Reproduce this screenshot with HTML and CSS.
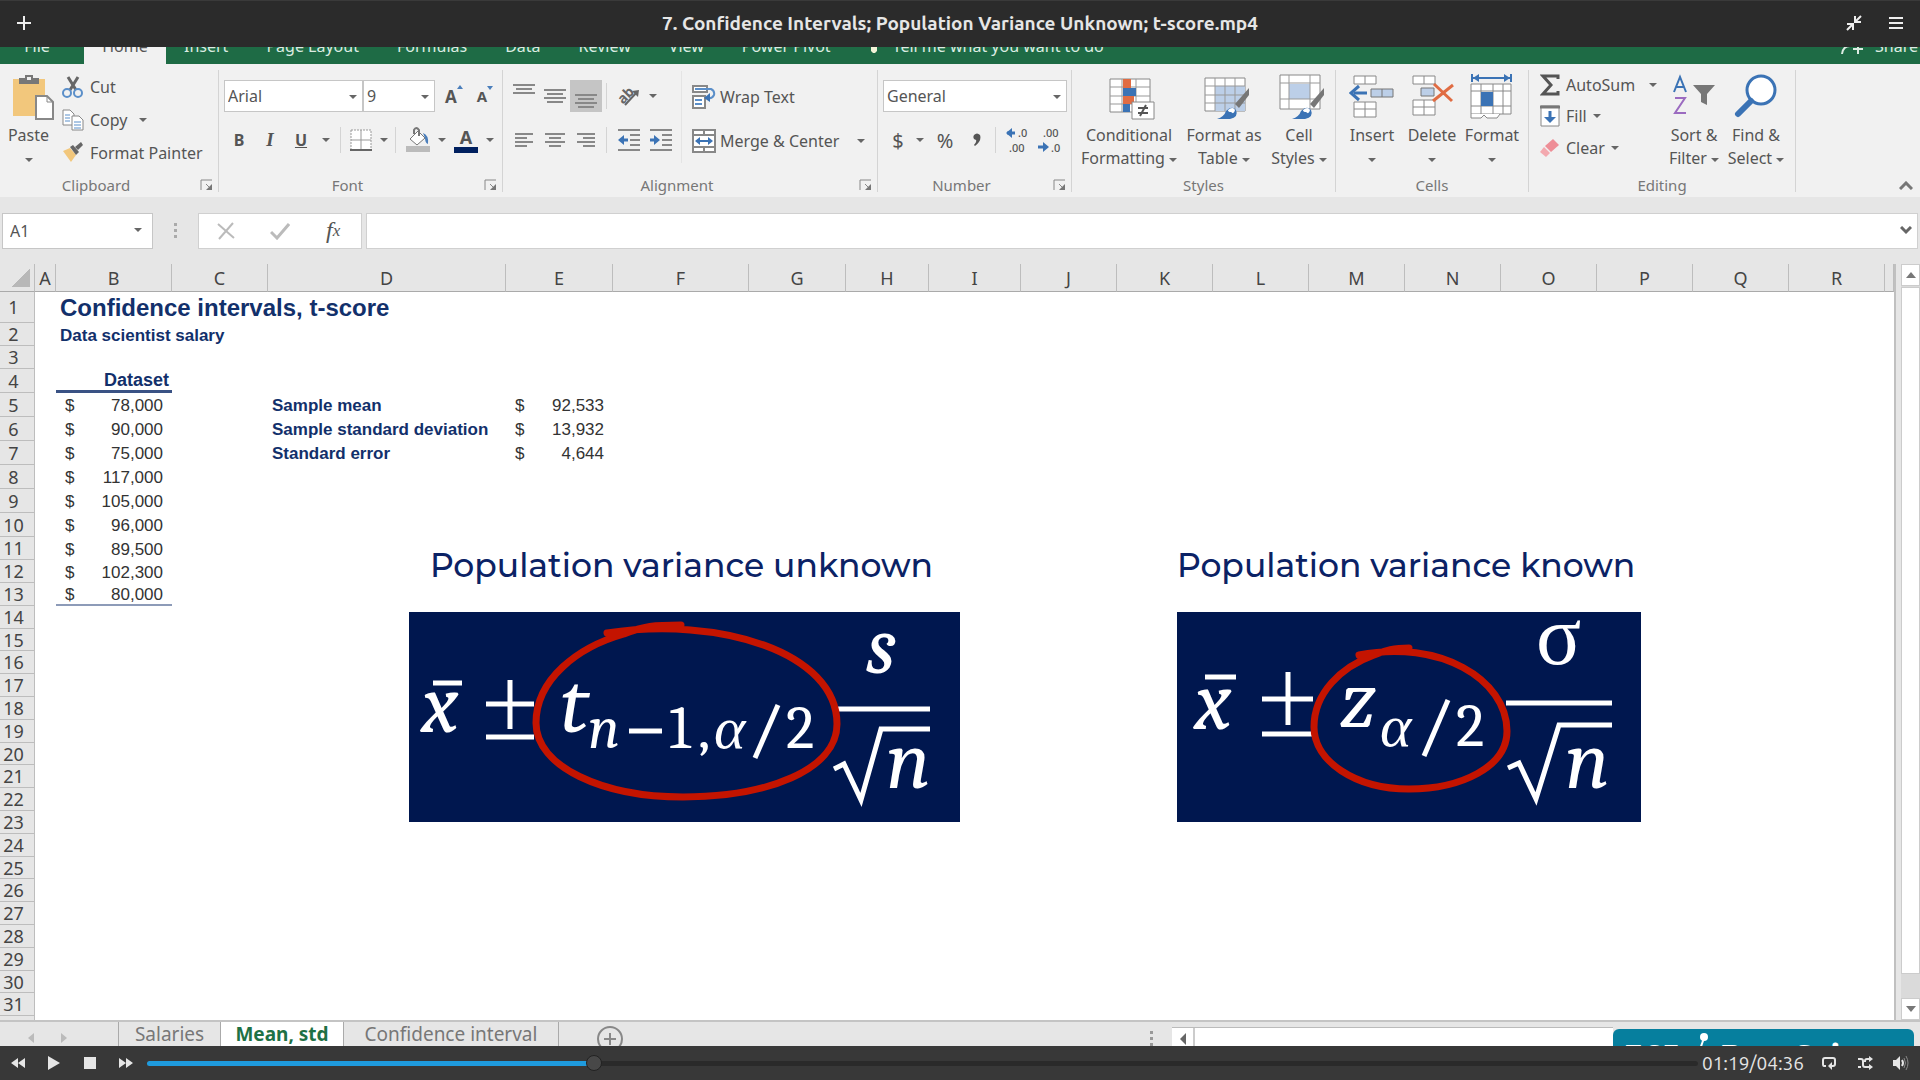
FILE: index.html
```html
<!DOCTYPE html>
<html lang="en">
  <head>
    <meta charset="UTF-8" />
    <title>7. Confidence Intervals; Population Variance Unknown; t-score.mp4</title>
    <link rel="stylesheet" href="styles.css" />
  </head>
  <body>
    <header class="titlebar">
      <button type="button" aria-label="Add">
        <svg width="14" height="14"><path d="M7 0v14M0 7h14" stroke="#eee" stroke-width="2" /></svg>
      </button>
      <h1>7. Confidence Intervals; Population Variance Unknown; t-score.mp4</h1>
      <div class="window-buttons">
        <button type="button" aria-label="Leave fullscreen">
          <svg width="16" height="16" fill="none" stroke="#eee" stroke-width="2">
            <path d="M15 1L10 6M9 1v6h6M1 15l5-5M1 9h6v6" />
          </svg>
        </button>
        <button type="button" aria-label="Menu">
          <svg width="14" height="12"><path d="M0 1h14M0 6h14M0 11h14" stroke="#eee" stroke-width="2" /></svg>
        </button>
      </div>
    </header>

    <main class="video">
      <nav class="tabs">
        <a href="#" class="tab-file">File</a>
        <a href="#" class="tab-home">Home</a>
        <a href="#">Insert</a>
        <a href="#">Page Layout</a>
        <a href="#">Formulas</a>
        <a href="#">Data</a>
        <a href="#">Review</a>
        <a href="#">View</a>
        <a href="#">Power Pivot</a>
        <a href="#" class="tell-me">
          <svg width="10" height="18"><circle cx="5" cy="6" r="4" fill="none" stroke="#dcebe2" stroke-width="2" /><path d="M2 9h6v5l-2 2H4l-2-2z" fill="#f3f3d8" /></svg>
          Tell me what you want to do
        </a>
        <a href="#" class="share">
          <svg width="24" height="20" fill="none" stroke="#dcebe2" stroke-width="2"><circle cx="9" cy="5" r="4" /><path d="M1 18q1-8 8-8M17 8v10M12 13h10" /></svg>
          Share
        </a>
      </nav>

      <!-- ribbon -->
      <section class="ribbon">
        <div class="group clipboard">
          <div class="body">
            <button type="button" class="big">
              <svg width="44" height="46">
                <path d="M2 5h32v37H2z" fill="#f2c77c" />
                <path d="M8 4h6V1h8v3h6v6H8z" fill="#777" /><path d="M16 3h4v3h-4z" fill="#eee" />
                <path d="M25 22h11l6 6v17H25z" fill="#fff" stroke="#888" stroke-width="2" />
                <path d="M36 22v6h6" fill="none" stroke="#888" />
              </svg>
              <span>Paste<br /><i class="caret"></i></span>
            </button>
            <div class="stack">
              <button type="button">
                <svg width="22" height="22" fill="none">
                  <path d="M6 1l8 13M16 1L8 14" stroke="#666" stroke-width="3" />
                  <circle cx="5" cy="17" r="4" stroke="#5b8fc9" stroke-width="2" /><circle cx="16" cy="17" r="4" stroke="#5b8fc9" stroke-width="2" />
                </svg>
                Cut
              </button>
              <button type="button">
                <svg width="22" height="22" fill="#fff" stroke="#888">
                  <path d="M1 1h7l4 4v11H1z" /><path d="M10 7h7l4 4v10H10z" />
                  <path d="M3 6h5M3 9h5M3 12h5M12 13h7M12 16h7M12 19h7" stroke="#5b8fc9" />
                </svg>
                Copy <i class="caret"></i>
              </button>
              <button type="button">
                <svg width="22" height="22">
                  <path d="M1 9l7-3 6 7-5 7z" fill="#f2c77c" /><path d="M8 5l3-2 6 7-3 3z" fill="#666" /><path d="M13 5l6-5 2 3-5 5z" fill="#666" />
                </svg>
                Format Painter
              </button>
            </div>
          </div>
          <footer><span>Clipboard</span><button type="button" class="launch" aria-label="Clipboard options"><svg width="14" height="12"><path d="M1 11V1h11M6 5l4 4" fill="none" stroke="#888" /><path d="M12 5v6H6z" fill="#777" /></svg></button></footer>
        </div>

        <div class="group font">
          <div class="body rows">
            <div class="row combos">
              <span class="combo family"><select aria-label="Font"><option>Arial</option></select></span>
              <span class="combo size"><select aria-label="Font size"><option>9</option></select></span>
              <button type="button" class="w28 grow" aria-label="Increase font size"><b>A</b><svg width="6" height="16"><path d="M0 4l3-4 3 4z" fill="#4a7ebb" /></svg></button>
              <button type="button" class="w28 grow shrink" aria-label="Decrease font size"><b>A</b><svg width="6" height="16"><path d="M0 1l3 4 3-4z" fill="#4a7ebb" /></svg></button>
            </div>
            <div class="row">
              <button type="button" class="w30"><b>B</b></button>
              <button type="button" class="w32 italic"><b>I</b></button>
              <button type="button" class="w30 under"><b>U</b></button>
              <button type="button" class="w20" aria-label="Underline style"><i class="caret"></i></button>
              <i class="sep"></i>
              <button type="button" class="w32" aria-label="Borders">
                <svg width="22" height="22" fill="#fff" stroke="#999"><path d="M1 1h20v20H1z" stroke-dasharray="2 1" /><path d="M11 1v20M1 11h20" /><path d="M0 21h22" stroke="#666" stroke-width="2" /></svg>
              </button>
              <button type="button" class="w14" aria-label="Border style"><i class="caret"></i></button>
              <i class="sep"></i>
              <button type="button" class="w36" aria-label="Fill color">
                <svg width="24" height="26"><path d="M0 19h24v6H0z" fill="#bbb" /><path d="M4 12l8-8 7 7-8 7z" fill="#fff" stroke="#777" /><path d="M8 7V3q2-4 5 0v6" fill="none" stroke="#777" stroke-width="2" /><path d="M17 6q6 2 5 11-3-1-3-6z" fill="#4a7ebb" /></svg>
              </button>
              <button type="button" class="w12" aria-label="Fill color list"><i class="caret"></i></button>
              <button type="button" class="w36 color"><b>A</b></button>
              <button type="button" class="w12" aria-label="Font color list"><i class="caret"></i></button>
            </div>
          </div>
          <footer><span>Font</span><button type="button" class="launch" aria-label="Font options"><svg width="14" height="12"><path d="M1 11V1h11M6 5l4 4" fill="none" stroke="#888" /><path d="M12 5v6H6z" fill="#777" /></svg></button></footer>
        </div>

        <div class="group alignment">
          <div class="body">
            <div class="rows align-icons">
              <div class="row">
                <button type="button" class="w32" aria-label="Top align"><svg width="22" height="30" stroke="#888" stroke-width="2"><path d="M0 4h22M3 8h16M0 12h22" /></svg></button>
                <button type="button" class="w30" aria-label="Middle align"><svg width="22" height="30" stroke="#888" stroke-width="2"><path d="M0 9h22M3 13h16M0 17h22M3 21h16" /></svg></button>
                <button type="button" class="w32 pressed" aria-label="Bottom align"><svg width="22" height="30" stroke="#888" stroke-width="2"><path d="M0 14h22M3 18h16M0 22h22M3 26h16" /></svg></button>
                <i class="sep"></i>
                <button type="button" class="w36" aria-label="Orientation"><svg width="26" height="26"><text x="2" y="18" transform="rotate(-45 9 14)" class="ab">ab</text><path d="M9 22L21 9" stroke="#666" stroke-width="2" /><path d="M23 7l-7 1 6 6z" fill="#666" /></svg></button>
                <button type="button" class="w12" aria-label="Orientation list"><i class="caret"></i></button>
              </div>
              <div class="row">
                <button type="button" class="w32" aria-label="Align left"><svg width="18" height="16" stroke="#888" stroke-width="2"><path d="M0 2h18M0 6h12M0 10h18M0 14h12" /></svg></button>
                <button type="button" class="w30" aria-label="Center"><svg width="20" height="16" stroke="#888" stroke-width="2"><path d="M0 2h20M4 6h12M0 10h20M4 14h12" /></svg></button>
                <button type="button" class="w32" aria-label="Align right"><svg width="18" height="16" stroke="#888" stroke-width="2"><path d="M0 2h18M6 6h12M0 10h18M6 14h12" /></svg></button>
                <i class="sep"></i>
                <button type="button" class="w36" aria-label="Decrease indent"><svg width="22" height="22" stroke="#888" stroke-width="2"><path d="M0 1h22M12 6h10M12 11h10M12 16h10M0 21h22" /><path d="M10 11H3" stroke="#3b73b5" stroke-width="3" /><path d="M6 6l-6 5 6 5z" fill="#3b73b5" stroke="none" /></svg></button>
                <button type="button" class="w28" aria-label="Increase indent"><svg width="22" height="22" stroke="#888" stroke-width="2"><path d="M0 1h22M12 6h10M12 11h10M12 16h10M0 21h22" /><path d="M0 11h7" stroke="#3b73b5" stroke-width="3" /><path d="M4 6l6 5-6 5z" fill="#3b73b5" stroke="none" /></svg></button>
              </div>
            </div>
            <div class="rows wrap-merge">
              <button type="button">
                <svg width="24" height="24" fill="none" stroke="#888" stroke-width="2"><path d="M1 1h14v6H1zM1 11h12v12H1z" fill="#fff" /><path d="M3 4h16q4 2 3 6-2 4-6 3" stroke="#5b8fc9" /><path d="M3 15h7M3 19h7" stroke="#5b8fc9" /><path d="M18 8l-6 5 6 4z" fill="#3b73b5" stroke="none" /></svg>
                Wrap Text
              </button>
              <button type="button">
                <svg width="24" height="24" fill="#fff" stroke="#888" stroke-width="2"><path d="M1 1h22v22H1zM1 6h22M1 18h22M12 1v5M12 18v5" /><path d="M5 12h14" stroke="#3b73b5" /><path d="M8 8l-5 4 5 4zM16 8l5 4-5 4z" fill="#3b73b5" stroke="none" /></svg>
                Merge &amp; Center <i class="caret"></i>
              </button>
            </div>
          </div>
          <footer><span>Alignment</span><button type="button" class="launch" aria-label="Alignment options"><svg width="14" height="12"><path d="M1 11V1h11M6 5l4 4" fill="none" stroke="#888" /><path d="M12 5v6H6z" fill="#777" /></svg></button></footer>
        </div>

        <div class="group number">
          <div class="body rows">
            <div class="row">
              <span class="combo format"><select aria-label="Number format"><option>General</option></select></span>
            </div>
            <div class="row">
              <button type="button" class="w30 sign">$</button>
              <button type="button" class="w14" aria-label="Currency list"><i class="caret"></i></button>
              <button type="button" class="w36 sign">%</button>
              <button type="button" class="w28" aria-label="Comma style"><svg width="8" height="14"><path d="M1 2q3-3 6 0 2 6-5 11l-1-1q3-3 2-5-4-1-2-5z" fill="#555" /></svg></button>
              <i class="sep"></i>
              <button type="button" class="w36" aria-label="Increase decimal"><svg width="24" height="26" class="dec"><text x="12" y="10">.0</text><text x="3" y="25">.00</text><path d="M1 6h8" stroke="#3b73b5" stroke-width="3" /><path d="M6 1L0 6l6 5z" fill="#3b73b5" /></svg></button>
              <button type="button" class="w28" aria-label="Decrease decimal"><svg width="24" height="26" class="dec"><text x="5" y="10">.00</text><text x="13" y="25">.0</text><path d="M0 20h8" stroke="#3b73b5" stroke-width="3" /><path d="M5 15l6 5-6 5z" fill="#3b73b5" /></svg></button>
            </div>
          </div>
          <footer><span>Number</span><button type="button" class="launch" aria-label="Number options"><svg width="14" height="12"><path d="M1 11V1h11M6 5l4 4" fill="none" stroke="#888" /><path d="M12 5v6H6z" fill="#777" /></svg></button></footer>
        </div>

        <div class="group styles">
          <div class="body">
            <button type="button" class="big w100">
              <svg width="46" height="46">
                <path d="M1 5h40v33H1z" fill="#fff" stroke="#888" /><path d="M1 13h40M1 22h40M1 30h40M13 5v33M27 5v33" stroke="#999" />
                <path d="M14 5h8v9h-8z" fill="#e06c43" /><path d="M14 14h13v8H14z" fill="#3b73b5" /><path d="M14 22h11v8H14z" fill="#e06c43" /><path d="M14 30h7v8h-7z" fill="#3b73b5" />
                <path d="M23 28h22v17H23z" fill="#fff" stroke="#888" /><path d="M29 34h10M29 39h10M37 31l-6 11" stroke="#555" stroke-width="2" />
              </svg>
              <span>Conditional<br />Formatting <i class="caret"></i></span>
            </button>
            <button type="button" class="big w90">
              <svg width="46" height="46">
                <path d="M1 4h40v33H1z" fill="#fff" stroke="#888" /><path d="M11 12h30v25H11z" fill="#bccfe8" /><path d="M1 12h40M1 21h40M1 29h40M11 4v33M21 4v33M31 4v33" stroke="#999" fill="none" />
                <path d="M45 14v7L35 34l-4-4z" fill="#777" /><path d="M13 45q7-2 9-8 6-6 10-1 3 7-6 9z" fill="#3b73b5" /><path d="M24 36q5-4 7 0-1 5-4 2-3 0-3-2z" fill="#fff" />
              </svg>
              <span>Format as<br />Table <i class="caret"></i></span>
            </button>
            <button type="button" class="big w60">
              <svg width="46" height="46">
                <path d="M1 1h40v34H1z" fill="#fff" stroke="#888" /><path d="M10 10h21v15H10z" fill="#bccfe8" /><path d="M1 9h40M1 25h40M10 1v34M31 1v34" stroke="#999" fill="none" />
                <path d="M45 14v7L35 34l-4-4z" fill="#777" /><path d="M13 45q7-2 9-8 6-6 10-1 3 7-6 9z" fill="#3b73b5" /><path d="M24 36q5-4 7 0-1 5-4 2-3 0-3-2z" fill="#fff" />
              </svg>
              <span>Cell<br />Styles <i class="caret"></i></span>
            </button>
          </div>
          <footer><span>Styles</span></footer>
        </div>

        <div class="group cells">
          <div class="body">
            <button type="button" class="big w60">
              <svg width="46" height="46">
                <path d="M5 2h22v8H5zM16 2v8M5 28h22v15H5zM5 35h22M16 28v15" fill="#fff" stroke="#888" />
                <path d="M22 15h22v8H22zM33 15v8" fill="#bccfe8" stroke="#777" /><path d="M18 19H5" stroke="#3b73b5" stroke-width="3" /><path d="M10 12l-8 7 8 7" fill="none" stroke="#3b73b5" stroke-width="3" />
              </svg>
              <span>Insert<br /><i class="caret"></i></span>
            </button>
            <button type="button" class="big w60">
              <svg width="46" height="46">
                <path d="M4 2h22v8H4zM15 2v8M4 26h22v15H4zM4 33h22M15 26v15" fill="#fff" stroke="#888" />
                <path d="M12 14h13v8H12z" fill="#bccfe8" stroke="#777" /><path d="M25 10l18 17M44 11L24 27" stroke="#e06c43" stroke-width="3" />
              </svg>
              <span>Delete<br /><i class="caret"></i></span>
            </button>
            <button type="button" class="big w60">
              <svg width="46" height="46">
                <path d="M3 4h38M3 0v8M42 0v8" stroke="#3b73b5" stroke-width="2" /><path d="M10 0L4 4l6 4zM35 0l6 4-6 4z" fill="#3b73b5" />
                <path d="M2 10h40v30H2zM2 17h40M2 32h40M12 10v30M24 10v30M34 10v30" fill="#fff" stroke="#888" /><path d="M12 18h12v14H12z" fill="#3b73b5" />
                <path d="M2 40v4h10l3-3 3 3h10l3-4" fill="#fff" stroke="#888" />
              </svg>
              <span>Format<br /><i class="caret"></i></span>
            </button>
          </div>
          <footer><span>Cells</span></footer>
        </div>

        <div class="group editing">
          <div class="body">
            <div class="stack">
              <button type="button">
                <svg width="20" height="22"><path d="M18 5V2H3l8 9-8 9h15v-3" fill="none" stroke="#555" stroke-width="3" /></svg>
                AutoSum <i class="caret"></i>
              </button>
              <button type="button">
                <svg width="20" height="22"><path d="M1 1h18v20H1z" fill="#fff" stroke="#888" /><path d="M0 2h20" stroke="#777" stroke-width="3" /><path d="M10 6v8" stroke="#3b73b5" stroke-width="3" /><path d="M4 12l6 6 6-6z" fill="#3b73b5" /></svg>
                Fill <i class="caret"></i>
              </button>
              <button type="button">
                <svg width="20" height="22"><path d="M13 2l6 6-8 7-6-6z" fill="#ee8e97" /><path d="M4 10l6 6-4 4-6-5z" fill="#f3a9af" /></svg>
                Clear <i class="caret"></i>
              </button>
            </div>
            <button type="button" class="big w62">
              <svg width="44" height="46" fill="none">
                <path d="M2 18L8 3l6 15M4 13h8" stroke="#3b73b5" stroke-width="2" /><path d="M3 24h10L3 39h11" stroke="#9b6bc0" stroke-width="2" />
                <path d="M21 11h22l-8 9v11l-6-3v-8z" fill="#777" />
              </svg>
              <span>Sort &amp;<br />Filter <i class="caret"></i></span>
            </button>
            <button type="button" class="big w62">
              <svg width="44" height="46"><circle cx="27" cy="16" r="14" fill="#fff" stroke="#3b73b5" stroke-width="3" /><path d="M17 27L4 40" stroke="#3b73b5" stroke-width="6" stroke-linecap="round" /></svg>
              <span>Find &amp;<br />Select <i class="caret"></i></span>
            </button>
          </div>
          <footer><span>Editing</span></footer>
        </div>
        <button type="button" class="collapse" aria-label="Collapse the ribbon"><svg width="14" height="9"><path d="M1 8l6-6 6 6" fill="none" stroke="#777" stroke-width="3" /></svg></button>
      </section>

      <!-- formula bar -->
      <section class="formula-bar">
        <span class="combo name"><input type="text" value="A1" aria-label="Name box" /></span>
        <svg class="dots" width="4" height="18" fill="#aaa"><path d="M0 1h3v3H0zM0 7h3v3H0zM0 13h3v3H0z" /></svg>
        <div class="entry-buttons">
          <button type="button" aria-label="Cancel"><svg width="18" height="18"><path d="M1 2l16 14M16 1L2 17" stroke="#bbb" stroke-width="2" /></svg></button>
          <button type="button" aria-label="Enter"><svg width="20" height="18"><path d="M1 10l6 6L19 2" fill="none" stroke="#bbb" stroke-width="3" /></svg></button>
          <button type="button" class="fx"><i>f</i><sub>x</sub></button>
        </div>
        <div class="entry">
          <input type="text" aria-label="Formula" />
          <svg width="12" height="9"><path d="M1 1l5 5 5-5" fill="none" stroke="#666" stroke-width="3" /></svg>
        </div>
      </section>

      <!-- worksheet -->
      <section class="sheet">
        <div class="cells-area">
          <table>
            <colgroup>
              <col class="c-head" /><col class="c-a" /><col class="c-b" /><col class="c-c" /><col class="c-d" /><col class="c-e" /><col class="c-f" /><col class="c-g" /><col class="c-h" /><col class="c-i" />
              <col class="c-j" span="9" /><col />
            </colgroup>
            <thead>
              <tr>
                <th class="corner"></th><th>A</th><th>B</th><th>C</th><th>D</th><th>E</th><th>F</th><th>G</th><th>H</th><th>I</th><th>J</th><th>K</th><th>L</th><th>M</th><th>N</th><th>O</th><th>P</th><th>Q</th><th>R</th><th></th>
              </tr>
            </thead>
            <tbody>
              <tr class="first"><th>1</th><td></td><td colspan="3" class="title">Confidence intervals, t-score</td></tr>
              <tr><th>2</th><td></td><td colspan="3" class="label">Data scientist salary</td></tr>
              <tr><th>3</th></tr>
              <tr class="tall"><th>4</th><td></td><td class="head">Dataset</td></tr>
              <tr class="tall"><th>5</th><td></td><td><span class="money"><i>$</i>78,000</span></td><td></td><td class="label">Sample mean</td><td><span class="money"><i>$</i>92,533</span></td></tr>
              <tr class="tall"><th>6</th><td></td><td><span class="money"><i>$</i>90,000</span></td><td></td><td class="label">Sample standard deviation</td><td><span class="money"><i>$</i>13,932</span></td></tr>
              <tr class="tall"><th>7</th><td></td><td><span class="money"><i>$</i>75,000</span></td><td></td><td class="label">Standard error</td><td><span class="money"><i>$</i>4,644</span></td></tr>
              <tr class="tall"><th>8</th><td></td><td><span class="money"><i>$</i>117,000</span></td></tr>
              <tr class="tall"><th>9</th><td></td><td><span class="money"><i>$</i>105,000</span></td></tr>
              <tr class="tall"><th>10</th><td></td><td><span class="money"><i>$</i>96,000</span></td></tr>
              <tr><th>11</th><td></td><td><span class="money"><i>$</i>89,500</span></td></tr>
              <tr><th>12</th><td></td><td><span class="money"><i>$</i>102,300</span></td></tr>
              <tr><th>13</th><td></td><td class="last"><span class="money"><i>$</i>80,000</span></td></tr>
              <tr><th>14</th></tr>
              <tr><th>15</th></tr>
              <tr><th>16</th></tr>
              <tr><th>17</th></tr>
              <tr><th>18</th></tr>
              <tr><th>19</th></tr>
              <tr><th>20</th></tr>
              <tr><th>21</th></tr>
              <tr><th>22</th></tr>
              <tr><th>23</th></tr>
              <tr><th>24</th></tr>
              <tr><th>25</th></tr>
              <tr><th>26</th></tr>
              <tr><th>27</th></tr>
              <tr><th>28</th></tr>
              <tr><th>29</th></tr>
              <tr><th>30</th></tr>
              <tr><th>31</th></tr>
              <tr><th></th></tr>
            </tbody>
          </table>

          <figure class="formula unknown">
            <figcaption>Population variance unknown</figcaption>
            <svg width="551" height="210">
              <text x="12" y="120" class="m">x</text>
              <path d="M24 71h29M77 92h48M101 68v49M77 125h48" class="line" />
              <text x="151" y="120" class="m">t</text>
              <text x="179" y="136" class="s">n</text>
              <path d="M220 119h33" class="line" />
              <text x="260" y="136" class="s up">1</text>
              <text x="289" y="136" class="s up">,</text>
              <text x="305" y="136" class="s">α</text>
              <path d="M346 146l23-53" class="line" />
              <text x="377" y="136" class="s up">2</text>
              <text x="457" y="61" class="m">s</text>
              <path d="M429 97h92" class="line" />
              <path d="M425 157l10-5 17 36 20-71h49" class="line" />
              <text x="477" y="176" class="m">n</text>
              <path d="M198 21C310 4 428 40 428 112c0 46-70 73-154 73-80 0-147-30-147-74 0-44 42-76 88-89 20-8 30-9 57-9" class="pen" />
            </svg>
          </figure>

          <figure class="formula known">
            <figcaption>Population variance known</figcaption>
            <svg width="464" height="210">
              <text x="17" y="117" class="m">x</text>
              <path d="M28 65h31M85 87h51M111 60v53M85 122h51" class="line" />
              <text x="163" y="115" class="m">z</text>
              <text x="203" y="134" class="s">α</text>
              <path d="M247 144l24-56" class="line" />
              <text x="279" y="134" class="s up">2</text>
              <text x="359" y="52" class="m up">σ</text>
              <path d="M329 91h106" class="line" />
              <path d="M331 156l11-5 17 36 23-74h53" class="line" />
              <text x="388" y="176" class="m">n</text>
              <path d="M182 43c80-16 148 24 148 76 0 36-46 58-98 58-54 0-95-28-95-62 0-34 27-60 60-72 12-5 20-7 35-7" class="pen" />
            </svg>
          </figure>
        </div>
        <div class="vscroll">
          <button type="button" aria-label="Scroll up"><svg width="10" height="6"><path d="M0 6l5-6 5 6z" fill="#777" /></svg></button>
          <div class="thumb"></div>
          <button type="button" aria-label="Scroll down"><svg width="10" height="6"><path d="M0 0l5 6 5-6z" fill="#777" /></svg></button>
        </div>
      </section>

      <section class="sheet-tabs">
        <div class="arrows">
          <svg width="6" height="10"><path d="M6 0v10L0 5z" fill="#bbb" /></svg>
          <svg width="6" height="10"><path d="M0 0v10l6-5z" fill="#bbb" /></svg>
        </div>
        <a href="#" class="salaries">Salaries</a>
        <a href="#" class="active">Mean, std</a>
        <a href="#" class="interval">Confidence interval</a>
        <button type="button" class="new-sheet" aria-label="New sheet">
          <svg width="26" height="26" fill="none" stroke="#888" stroke-width="2"><circle cx="13" cy="13" r="12" /><path d="M13 7v12M7 13h12" /></svg>
        </button>
        <svg class="dots" width="4" height="18" fill="#999"><path d="M0 1h3v3H0zM0 7h3v3H0zM0 13h3v3H0z" /></svg>
        <div class="hscroll">
          <button type="button" aria-label="Scroll left"><svg width="6" height="12"><path d="M6 0v12L0 6z" fill="#666" /></svg></button>
        </div>
        <div class="logo">
          <span>365</span>
          <svg width="20" height="24"><circle cx="14" cy="6" r="4" fill="#fff" /><path d="M14 7L8 24" stroke="#fff" stroke-width="2" /></svg>
          <span>DataScience</span>
        </div>
      </section>
    </main>

    <footer class="player">
      <button type="button" aria-label="Previous"><svg width="14" height="10" fill="#e6e6e6"><path d="M7 0v10L0 5zM14 0v10L7 5z" /></svg></button>
      <button type="button" aria-label="Play"><svg width="14" height="14" fill="#e6e6e6"><path d="M1 0l12 7-12 7z" /></svg></button>
      <button type="button" aria-label="Stop"><svg width="12" height="12" fill="#e6e6e6"><path d="M0 0h12v12H0z" /></svg></button>
      <button type="button" class="next" aria-label="Next"><svg width="14" height="10" fill="#e6e6e6"><path d="M0 0v10l7-5zM7 0v10l7-5z" /></svg></button>
      <input type="range" min="0" max="276" value="79" aria-label="Position" />
      <span class="time">01:19/04:36</span>
      <button type="button" aria-label="Repeat"><svg width="14" height="14" fill="none" stroke="#e6e6e6" stroke-width="2"><path d="M4 10H2Q1 10 1 8V4q0-2 2-2h8q2 0 2 2v4q0 2-2 2H8" /><path d="M10 6v8l-4-4z" fill="#e6e6e6" stroke="none" /></svg></button>
      <button type="button" aria-label="Shuffle"><svg width="15" height="14" fill="none" stroke="#e6e6e6" stroke-width="2"><path d="M0 3h3q2 0 2 2v4q0 2 2 2h5M0 11h3M7 6V5q0-2 2-2h3" /><path d="M11 0l4 3-4 3zM11 8l4 3-4 3z" fill="#e6e6e6" stroke="none" /></svg></button>
      <button type="button" aria-label="Volume"><svg width="16" height="14" fill="none"><path d="M0 4h3l4-4v14l-4-4H0z" fill="#e6e6e6" /><path d="M9 4q2 3 0 6" stroke="#e6e6e6" stroke-width="2" /><path d="M11 2q3 5 0 10M13 0q4 7 0 14" stroke="#888" /></svg></button>
    </footer>
  </body>
</html>
```
FILE: styles.css
```css
* {
  box-sizing: border-box;
  margin: 0;
  padding: 0;
}

body {
  display: flex;
  flex-direction: column;
  height: 100vh;
  overflow: hidden;
  font-family: "Noto Sans", sans-serif;
  font-size: 16px;
  color: #555;
  background: #383838;
}

button,
select,
input {
  border: 0;
  background: none;
  font: inherit;
  color: inherit;
}

button {
  display: flex;
  align-items: center;
  justify-content: center;
}

a {
  color: inherit;
  text-decoration: none;
}

svg {
  flex: none;
}

/* title bar */
.titlebar {
  display: grid;
  grid-template-columns: 1fr auto 1fr;
  align-items: center;
  height: 47px;
  padding: 0 17px 2px;
  background: #2b2b2b;
  border-top: 1px solid #3a3a3a;
}

.titlebar > button {
  justify-self: start;
}

.titlebar h1 {
  font-family: Ubuntu, "Noto Sans", sans-serif;
  font-size: 19px;
  line-height: 24px;
  font-weight: 600;
  color: #e6e6e6;
}

.window-buttons {
  display: flex;
  justify-content: flex-end;
  gap: 27px;
}

/* the frame is cropped above the ribbon tabs */
.video {
  display: flex;
  flex-direction: column;
  flex: 1;
  min-height: 0;
  overflow: hidden;
  background: #e6e6e6;
}

.tabs {
  display: flex;
  flex: none;
  align-items: center;
  gap: 38px;
  height: 36px;
  margin-top: -19px;
  color: #dcebe2;
  background: #1e6b45;
}

.tabs a {
  display: flex;
  align-items: center;
  height: 36px;
  white-space: nowrap;
}

.tabs .tab-file {
  justify-content: center;
  width: 84px;
  margin-right: -38px;
  padding-right: 10px;
}

.tabs .tab-home {
  justify-content: center;
  width: 82px;
  margin-right: -20px;
  color: #555;
  background: #f1f1f1;
}

.tell-me {
  gap: 14px;
}

.share {
  gap: 10px;
  margin-left: auto;
  padding-right: 2px;
}

/* ribbon */
.ribbon {
  display: flex;
  flex: none;
  height: 133px;
  background: #f1f1f1;
}

.group {
  display: flex;
  flex: none;
  flex-direction: column;
  margin: 6px 0 5px;
  border-right: 1px solid #d4d4d4;
}

.clipboard { width: 219px; }
.font { width: 284px; }
.alignment { width: 375px; }
.number { width: 194px; }
.styles { width: 264px; }
.cells { width: 193px; }
.editing { width: 267px; }

.body {
  display: flex;
  flex: 1;
}

.group footer {
  display: flex;
  align-items: center;
  height: 14px;
  line-height: 14px;
  font-size: 15px;
  color: #777;
}

.group footer span {
  flex: 1;
  text-align: center;
}

.launch {
  width: 26px;
  padding-left: 4px;
}

.caret {
  display: inline-block;
  border: 4px solid transparent;
  border-top-color: #666;
  border-bottom: 0;
  vertical-align: middle;
}

.big {
  flex-direction: column;
  justify-content: flex-start;
  align-self: flex-start;
  gap: 4px;
  padding-top: 4px;
  line-height: 23px;
  white-space: nowrap;
}

.clipboard .big {
  width: 57px;
}

.clipboard .big svg {
  margin-left: 8px;
}

.stack {
  display: flex;
  flex-direction: column;
}

.stack button {
  justify-content: flex-start;
  gap: 6px;
  height: 33px;
  padding-left: 5px;
  white-space: nowrap;
}

.clipboard .stack .caret {
  margin-left: 6px;
}

.editing .stack {
  width: 134px;
  padding-left: 6px;
}

.editing .stack button {
  height: 32px;
}

.editing .stack button:first-child {
  height: 30px;
}

.editing .stack button:first-child .caret {
  margin-left: 8px;
}

.rows {
  display: flex;
  flex-direction: column;
  gap: 12px;
  padding-top: 10px;
}

.row {
  display: flex;
  align-items: center;
  height: 32px;
  padding-left: 5px;
}

.row button {
  height: 32px;
}

.w12 { width: 12px; }
.w14 { width: 14px; }
.w20 { width: 20px; }
.w28 { width: 28px; }
.w30 { width: 30px; }
.w32 { width: 32px; }
.w36 { width: 36px; }
.w60 { width: 60px; }
.w62 { width: 62px; }
.w90 { width: 90px; }
.w100 { width: 100px; }

.styles .body {
  padding-left: 7px;
}

.styles .big svg {
  margin-left: 6px;
}

.cells .body {
  padding-left: 6px;
}

.sep {
  width: 1px;
  height: 26px;
  margin: 0 4px;
  background: #d4d4d4;
}

.combo {
  position: relative;
  height: 32px;
  background: #fff;
  border: 1px solid #c6c6c6;
}

.combo::after {
  content: "";
  position: absolute;
  top: 14px;
  right: 5px;
  border: 4px solid transparent;
  border-top-color: #666;
  border-bottom: 0;
}

.combo select,
.combo input {
  width: 100%;
  height: 100%;
  padding-left: 3px;
  appearance: none;
}

.family { width: 139px; }
.size { width: 72px; }
.format { width: 184px; }

.grow {
  margin-left: 5px;
  font-size: 17px;
}

.shrink {
  margin-left: 3px;
  font-size: 15px;
}

.grow svg {
  align-self: flex-start;
  margin-top: 5px;
}

.italic {
  font-family: "Liberation Serif", serif;
  font-size: 19px;
  font-style: italic;
}

.under b {
  text-decoration: underline;
}

.color b {
  width: 24px;
  line-height: 19px;
  font-size: 18px;
  border-bottom: 6px solid #00205f;
}

.pressed {
  background: #c5c5c5;
}

.ab {
  font-size: 14px;
  font-weight: bold;
  fill: #666;
}

.dec {
  font-size: 11px;
  font-weight: 500;
  fill: #555;
}

.sign {
  font-size: 20px;
}

.align-icons {
  width: 178px;
}

.wrap-merge {
  align-self: flex-start;
  margin-top: 1px;
  padding-bottom: 6px;
  padding-left: 10px;
  border-left: 1px solid #e4e4e4;
}

.wrap-merge button {
  gap: 4px;
  height: 32px;
  align-self: flex-start;
  white-space: nowrap;
}

.wrap-merge .caret {
  margin-left: 14px;
}

.collapse {
  align-self: flex-end;
  margin: 0 7px 7px auto;
}

/* formula bar */
.formula-bar {
  display: flex;
  flex: none;
  align-items: center;
  height: 67px;
  padding: 0 2px;
}

.formula-bar .combo {
  width: 151px;
  height: 36px;
}

.formula-bar .combo input {
  padding-left: 7px;
}

.formula-bar .combo::after {
  right: 10px;
}

.formula-bar .dots {
  margin: 0 20px 0 21px;
}

.entry-buttons {
  display: flex;
  justify-content: space-around;
  width: 164px;
  height: 36px;
  padding-right: 3px;
  background: #fff;
  border: 1px solid #d0d0d0;
}

.fx {
  font-family: "Liberation Serif", serif;
  font-size: 24px;
}

.fx sub {
  font-size: 17px;
  font-style: italic;
}

.entry {
  display: flex;
  flex: 1;
  align-items: center;
  height: 36px;
  margin-left: 4px;
  padding-right: 5px;
  background: #fff;
  border: 1px solid #d0d0d0;
}

.entry input {
  flex: 1;
}

/* worksheet */
.sheet {
  display: flex;
  flex: 1;
  min-height: 0;
}

.cells-area {
  position: relative;
  flex: 1;
  overflow: hidden;
  border-right: 2px solid #c0c0c0;
}

table {
  width: 100%;
  table-layout: fixed;
  border-collapse: separate;
  border-spacing: 0;
  font-family: "Liberation Sans", sans-serif;
  font-size: 17px;
  line-height: 20px;
  color: #333;
  background: #fff;
}

.c-head { width: 35px; }
.c-a { width: 21px; }
.c-b { width: 116px; }
.c-c { width: 96px; }
.c-d { width: 238px; }
.c-e { width: 107px; }
.c-f { width: 136px; }
.c-g { width: 97px; }
.c-h { width: 83px; }
.c-i { width: 92px; }
.c-j { width: 96px; }

th {
  font-family: "Noto Sans", sans-serif;
  font-size: 18px;
  font-weight: normal;
  color: #444;
  background: #e6e6e6;
  border-right: 1px solid #bdbdbd;
}

thead th {
  height: 28px;
  border-bottom: 1px solid #aaa;
}

tbody th {
  padding-right: 7px;
  border-bottom: 1px solid #bdbdbd;
}

.corner {
  background: linear-gradient(135deg, transparent 50%, #b8b8b8 50%) 11px 5px / 19px 18px no-repeat #e6e6e6;
}

tr {
  height: 23px;
}

tr:nth-child(5n) {
  height: 22px;
}

tr.tall {
  height: 24px;
}

tr.first {
  height: 31px;
}

td {
  padding-top: 2px;
  white-space: nowrap;
}

.title {
  padding: 0 0 0 4px;
  font-size: 24px;
  font-weight: bold;
  color: #12306b;
}

.label {
  padding-left: 4px;
  font-weight: bold;
  color: #12306b;
}

.head {
  padding: 0 3px 0 0;
  font-size: 18px;
  font-weight: bold;
  text-align: right;
  color: #12306b;
  border-bottom: 3px solid #3a5284;
}

.last {
  border-bottom: 2px solid #8d9bb8;
}

.last .money {
  line-height: 19px;
}

.money {
  display: flex;
  justify-content: space-between;
  padding: 0 9px;
}

.money i {
  font-style: normal;
}

/* slides lying over the sheet */
.formula {
  position: absolute;
  top: 278px;
}

.unknown { left: 409px; }
.known { left: 1177px; }

.formula figcaption {
  height: 70px;
  padding-right: 6px;
  line-height: 46px;
  font-family: Montserrat, Inter, sans-serif;
  font-size: 33px;
  font-weight: 500;
  text-align: center;
  white-space: nowrap;
  color: #0b2265;
}

.formula svg {
  display: block;
  background: #00174f;
}

.formula text {
  font-family: Cambria, "Liberation Serif", serif;
  font-style: italic;
  fill: #fff;
}

.formula .m { font-size: 84px; }
.formula .s { font-size: 60px; }

.formula .up {
  font-style: normal;
}

.line {
  fill: none;
  stroke: #fff;
  stroke-width: 5;
}

.pen {
  fill: none;
  stroke: #c41400;
  stroke-width: 7;
  stroke-linecap: round;
}

.vscroll {
  display: flex;
  flex-direction: column;
  width: 19px;
  margin-left: 5px;
  background: #dadada;
}

.vscroll button {
  height: 22px;
  background: #fff;
  border: 1px solid #ccc;
}

.vscroll .thumb {
  flex: 1;
  margin: 1px 0 24px;
  background: #fff;
  border: 1px solid #ccc;
}

/* sheet tabs, cut off by the player controls */
.sheet-tabs {
  display: flex;
  flex: none;
  height: 26px;
  line-height: 24px;
  font-size: 19px;
  color: #777;
  border-top: 2px solid #c4c4c4;
  overflow: hidden;
}

.arrows {
  display: flex;
  gap: 27px;
  align-items: center;
  width: 118px;
  padding: 8px 0 0 28px;
}

.sheet-tabs a {
  text-align: center;
  white-space: nowrap;
}

.salaries {
  width: 102px;
  border-left: 1px solid #aaa;
}

.sheet-tabs .active {
  width: 124px;
  margin-top: -2px;
  padding-top: 2px;
  font-weight: bold;
  color: #1e7145;
  background: #fff;
  border: solid #aaa;
  border-width: 0 1px;
}

.interval {
  width: 215px;
  border-right: 1px solid #aaa;
}

.new-sheet {
  align-self: flex-start;
  margin: 4px auto 0 38px;
}

.sheet-tabs .dots {
  margin-top: 8px;
}

.hscroll {
  width: 441px;
  margin: 5px 0 0 18px;
  background: #fff;
  border-top: 1px solid #bbb;
}

.hscroll button {
  width: 23px;
  height: 22px;
  border-right: 2px solid #ccc;
}

.logo {
  display: flex;
  gap: 10px;
  width: 301px;
  height: 40px;
  margin: 7px 6px 0 0;
  padding: 8px 0 0 12px;
  line-height: 40px;
  font-family: Montserrat, Inter, sans-serif;
  font-size: 30px;
  font-weight: bold;
  color: #fff;
  background: #067f9e;
  border-radius: 6px;
}

.logo svg {
  margin-top: -6px;
}

/* player controls */
.player {
  display: flex;
  flex: none;
  align-items: center;
  height: 34px;
  padding: 0 12px 0 11px;
}

.player button {
  width: 14px;
  margin-right: 22px;
}

.player .next {
  margin-right: 14px;
}

.player button:last-child {
  margin-right: 0;
}

.player input {
  flex: 1;
  height: 16px;
  margin-right: 4px;
  appearance: none;
}

.player input::-webkit-slider-runnable-track {
  height: 5px;
  border-radius: 3px;
  background: linear-gradient(90deg, #1f9bde 28.6%, #2a2a2a 28.6%);
}

.player input::-webkit-slider-thumb {
  width: 16px;
  height: 16px;
  margin-top: -6px;
  appearance: none;
  background: #484848;
  border: 1px solid #222;
  border-radius: 50%;
}

.time {
  margin-right: 18px;
  font-family: Ubuntu, "Noto Sans", sans-serif;
  font-size: 19px;
  line-height: 24px;
  color: #e6e6e6;
}
```
